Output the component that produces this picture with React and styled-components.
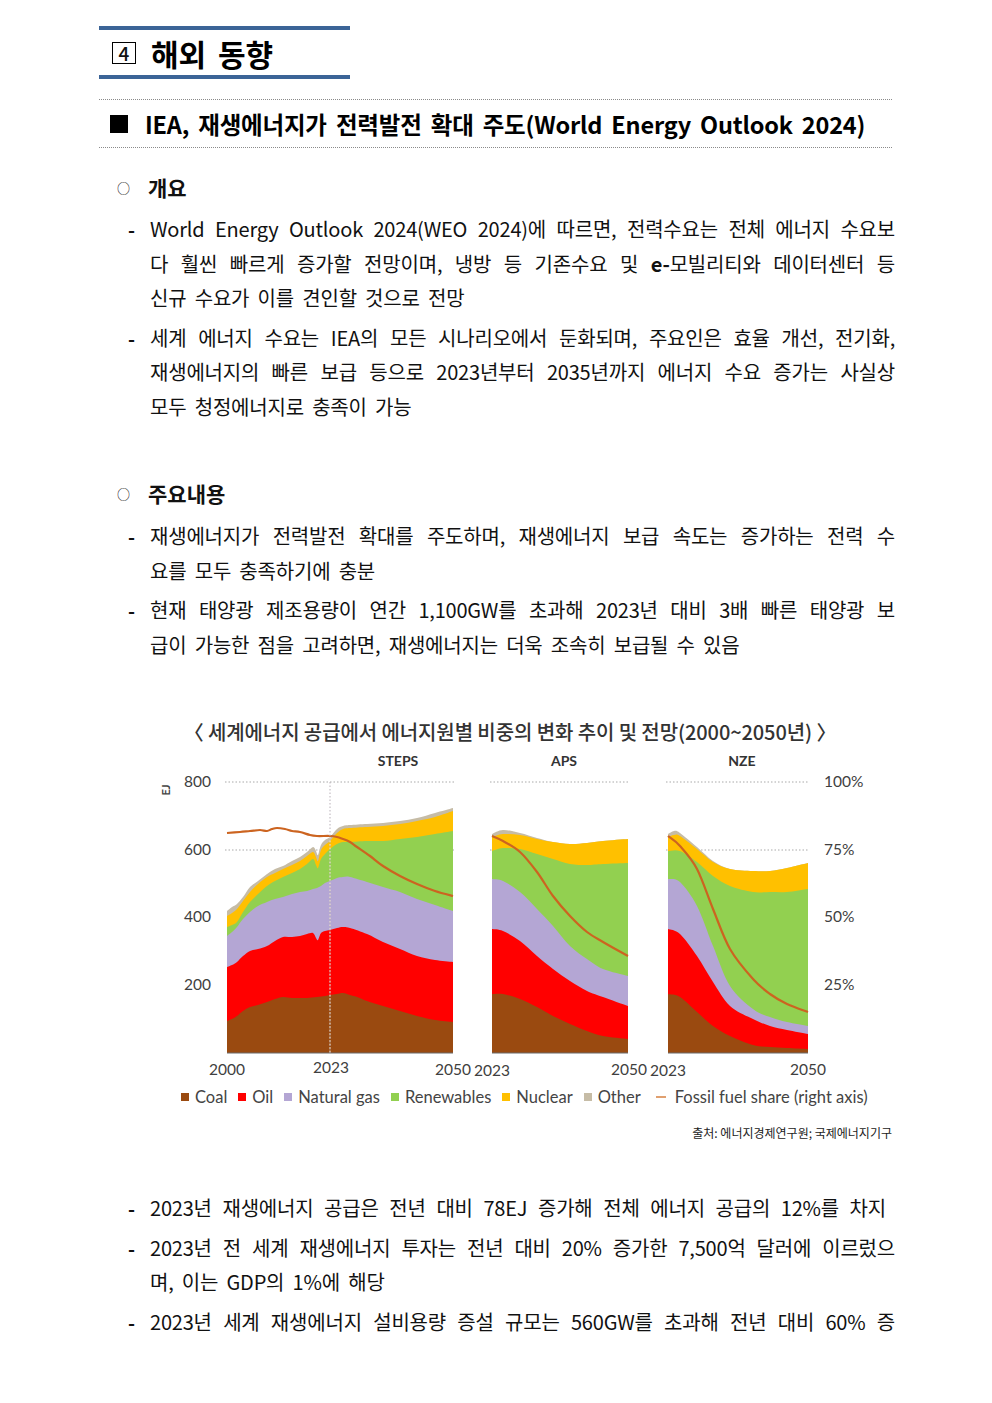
import styled, { createGlobalStyle } from "styled-components";

const BLUE = "#3b6497";
const BASE = 1054;

const colors = {
  coal: "#9a4a10",
  oil: "#ff0000",
  gas: "#b4a6d4",
  renew: "#92d050",
  nuclear: "#ffc000",
  other: "#c6bca6",
  fossil: "#cc6420",
};

// chart data, in page pixels (x, y)
const steps = {
  other: [[227,912],[232,908],[237,905],[243,898],[250,888],[258,882],[267,875],[275,870],[283,867],[292,862],[300,858],[307,853],[313,848],[316,852],[318,856],[321,846],[325,841],[330,838],[337,830],[343,827],[350,826],[367,825],[383,824],[400,822],[417,819],[435,814],[453,809]],
  nuclear: [[227,917],[232,914],[237,910],[243,902],[250,893],[258,885],[267,878],[275,874],[283,870],[292,866],[300,862],[307,857],[313,853],[316,858],[318,862],[321,851],[325,846],[330,842],[337,834],[343,830],[350,829],[367,828],[383,827],[400,825],[417,822],[435,818],[453,812]],
  renew: [[227,928],[232,926],[237,923],[243,913],[250,903],[258,895],[267,887],[275,882],[283,878],[292,874],[300,870],[307,865],[313,860],[316,866],[318,869],[321,860],[325,855],[330,850],[337,845],[343,843],[350,843],[367,842],[383,842],[400,840],[417,838],[435,835],[453,832]],
  gas: [[227,937],[232,933],[237,928],[243,920],[250,913],[258,907],[267,903],[275,900],[283,898],[292,895],[300,893],[307,892],[313,890],[317,889],[321,887],[325,884],[330,882],[337,879],[343,878],[350,878],[367,883],[383,888],[400,893],[417,900],[435,906],[453,912]],
  oil: [[227,968],[232,966],[237,963],[243,957],[250,952],[258,950],[267,947],[275,942],[283,938],[292,938],[300,937],[307,935],[313,934],[316,939],[318,941],[321,934],[325,932],[330,931],[337,929],[343,928],[350,929],[367,935],[383,943],[400,950],[417,957],[435,961],[453,963]],
  coal: [[227,1022],[232,1020],[237,1017],[243,1012],[250,1008],[258,1006],[267,1003],[275,1000],[283,998],[292,999],[300,999],[307,999],[317,998],[325,997],[330,996],[337,995],[343,994],[350,996],[357,998],[367,1002],[383,1007],[400,1012],[417,1017],[435,1021],[453,1023]],
  fossil: [[227,834],[240,833],[250,832],[260,831],[267,832],[272,830],[277,829],[285,830],[292,832],[300,833],[310,836],[317,837],[330,837],[337,838],[343,840],[350,843],[357,848],[370,857],[383,867],[400,877],[417,885],[435,892],[453,897]],
};

const aps = {
  other: [[492,835],[503,831],[520,834],[537,839],[553,843],[570,845],[587,844],[603,842],[628,840]],
  nuclear: [[492,838],[503,835],[520,836],[537,840],[553,843],[570,845],[587,844],[603,842],[628,840]],
  renew: [[492,852],[503,849],[520,850],[537,855],[553,860],[570,865],[587,866],[603,865],[628,864]],
  gas: [[492,880],[503,882],[520,893],[537,910],[553,927],[570,947],[587,960],[603,970],[628,977]],
  oil: [[492,930],[503,932],[520,942],[537,957],[553,970],[570,982],[587,992],[603,998],[628,1007]],
  coal: [[492,995],[503,995],[520,1000],[537,1008],[553,1017],[570,1025],[587,1032],[603,1037],[628,1040]],
  fossil: [[492,837],[503,842],[520,853],[537,873],[553,897],[570,917],[587,933],[603,943],[628,957]],
};

const nze = {
  other: [[668,835],[674,832],[680,834],[697,848],[713,862],[730,870],[753,872],[770,872],[787,869],[808,864]],
  nuclear: [[668,838],[674,836],[680,837],[697,850],[713,863],[730,870],[753,872],[770,872],[787,869],[808,864]],
  renew: [[668,852],[680,852],[697,863],[713,877],[730,887],[753,893],[770,893],[787,893],[808,890]],
  gas: [[668,880],[680,883],[697,907],[713,947],[730,987],[753,1010],[770,1018],[787,1023],[808,1027]],
  oil: [[668,930],[680,935],[697,957],[713,983],[730,1007],[753,1020],[770,1027],[787,1031],[808,1035]],
  coal: [[668,995],[680,998],[697,1013],[713,1027],[730,1037],[753,1046],[770,1048],[787,1049],[808,1050]],
  fossil: [[668,837],[680,847],[697,870],[713,910],[730,950],[753,980],[770,995],[787,1005],[808,1013]],
};

const layers = ["other", "nuclear", "renew", "gas", "oil", "coal"];

// catmull-rom through the points, as bezier segments
function curve(pts) {
  let d = "";
  for (let i = 0; i < pts.length - 1; i++) {
    const p0 = pts[i - 1] || pts[i];
    const p1 = pts[i];
    const p2 = pts[i + 1];
    const p3 = pts[i + 2] || p2;
    const c1 = [p1[0] + (p2[0] - p0[0]) / 6, p1[1] + (p2[1] - p0[1]) / 6];
    const c2 = [p2[0] - (p3[0] - p1[0]) / 6, p2[1] - (p3[1] - p1[1]) / 6];
    d += ` C${c1[0].toFixed(1)},${c1[1].toFixed(1)} ${c2[0].toFixed(1)},${c2[1].toFixed(1)} ${p2[0]},${p2[1]}`;
  }
  return d;
}

function area(pts) {
  const first = pts[0];
  const last = pts[pts.length - 1];
  return `M${first[0]},${BASE} L${first[0]},${first[1]}${curve(pts)} L${last[0]},${BASE} Z`;
}

function line(pts) {
  return `M${pts[0][0]},${pts[0][1]}${curve(pts)}`;
}

const GlobalStyle = createGlobalStyle`
  body {
    margin: 0;
    background: #fff;
    color: #111;
    font-family: "Noto Sans CJK KR", "Noto Sans", sans-serif;
  }
`;

const Page = styled.div`
  width: 992px;
  min-height: 1403px;
  box-sizing: border-box;
  padding: 26px 97px 0 99px;
`;

const ChapterHead = styled.div`
  width: 251px;
  height: 53px;
  box-sizing: border-box;
  border-top: 4px solid ${BLUE};
  border-bottom: 4px solid ${BLUE};
  display: flex;
  align-items: center;
  gap: 15px;
  padding-left: 13px;
`;

const NumBox = styled.span`
  width: 24px;
  height: 22px;
  box-sizing: border-box;
  border: 1.5px solid #000;
  display: flex;
  align-items: center;
  justify-content: center;
  font-size: 19px;
  font-weight: 500;
  line-height: 1;
`;

const ChapterTitle = styled.h1`
  margin: 0;
  font-size: 30px;
  font-weight: 700;
  line-height: 1;
  word-spacing: 5px;
  color: #000;
`;

const SectionHead = styled.h2`
  margin: 20px 3px 0 0;
  height: 49px;
  box-sizing: border-box;
  border-top: 1.5px dotted #8a8a8a;
  border-bottom: 1.5px dotted #8a8a8a;
  display: flex;
  align-items: center;
  gap: 17px;
  padding-left: 11px;
  font-size: 23.5px;
  font-weight: 700;
  letter-spacing: -0.2px;
  word-spacing: 4px;
  white-space: nowrap;
  color: #000;
`;

const Square = styled.span`
  width: 18px;
  height: 18px;
  background: #000;
  flex: none;
`;

const Topic = styled.div`
  display: flex;
  align-items: center;
  margin-top: ${(p) => p.$gap}px;
  padding-left: 18px;
  height: 34px;
  font-size: 21px;
  font-weight: 700;
`;

const Ring = styled.span`
  width: 31px;
  font-size: 13px;
  font-weight: 400;
`;

const Bullet = styled.div`
  display: flex;
  margin-top: ${(p) => p.$gap}px;
  padding-left: 29px;
`;

const Dash = styled.span`
  width: 22px;
  flex: none;
  font-size: 19px;
  font-weight: 700;
  line-height: 34.5px;
`;

const Lines = styled.div`
  width: 745px;
`;

const Line = styled.div`
  width: ${(p) => (p.$fill ? `${p.$fill}px` : "auto")};
  font-size: 20px;
  line-height: 34.5px;
  white-space: nowrap;
  letter-spacing: -0.2px;
  word-spacing: 4px;
  text-align: ${(p) => (p.$last ? "left" : "justify")};
  text-align-last: ${(p) => (p.$last ? "left" : "justify")};
`;

const Figure = styled.div`
  margin: 55px 0 0 51px;
  width: 720px;
`;

const FigTitle = styled.div`
  text-align: center;
  font-size: 20px;
  font-weight: 500;
  color: #333;
  line-height: 30px;
  letter-spacing: -0.1px;
`;

const Chart = styled.svg`
  display: block;
  width: 720px;
  height: 337px;
  font-family: Lato, "Open Sans", sans-serif;
`;

const Legend = styled.div`
  display: flex;
  align-items: center;
  gap: 11px;
  margin: 3px 0 0 31px;
  height: 20px;
  font-family: Lato, "Open Sans", sans-serif;
  font-size: 16.5px;
  color: #444;
`;

const Key = styled.span`
  display: flex;
  align-items: center;
  gap: 6px;
  &::before {
    content: "";
    width: ${(p) => (p.$line ? "10px" : "8px")};
    height: ${(p) => (p.$line ? "2px" : "8px")};
    background: ${(p) => p.$color};
    margin: ${(p) => (p.$line ? "0 3px 0 4px" : "0")};
  }
`;

const Source = styled.div`
  margin: 18px -22px 0 0;
  text-align: right;
  font-size: 12px;
  line-height: 16px;
  color: #222;
`;

function Item({ lines, gap }) {
  return (
    <Bullet $gap={gap}>
      <Dash>-</Dash>
      <Lines>
        {lines.map((l, i) => (
          <Line key={i} $fill={l.fill} $last={i === lines.length - 1 && !l.open && !l.fill}>
            {l.text}
          </Line>
        ))}
      </Lines>
    </Bullet>
  );
}

function Panel({ data }) {
  return (
    <g>
      {layers.map((k) => (
        <path key={k} d={area(data[k])} fill={colors[k]} />
      ))}
      <line x1={data.coal[0][0]} x2={data.coal[data.coal.length - 1][0]} y1={BASE} y2={BASE} stroke="#6b6b6b" strokeWidth="1.2" />
      <path d={line(data.fossil)} fill="none" stroke={colors.fossil} strokeWidth="2.2" />
    </g>
  );
}

function Grid({ x1, x2, ys }) {
  return ys.map((y) => (
    <line key={y} x1={x1} x2={x2} y1={y} y2={y} stroke="#a9a9a9" strokeWidth="1" strokeDasharray="1.5 2" />
  ));
}

function EnergyChart() {
  return (
    <Chart viewBox="150 748 720 337">
      <Grid x1={225} x2={455} ys={[783, 851]} />
      <Grid x1={490} x2={628} ys={[783, 851]} />
      <Grid x1={666} x2={808} ys={[783, 851]} />

      <Panel data={steps} />
      <Panel data={aps} />
      <Panel data={nze} />

      <line x1="330" x2="330" y1="783" y2="1054" stroke="#b8b0b8" strokeWidth="1" strokeDasharray="1.5 2" />
      <line x1="330" x2="330" y1="838" y2="1054" stroke="#f3e6d0" strokeWidth="1" strokeDasharray="1.5 2" />

      <g fontSize="14" fontWeight="700" fill="#333" textAnchor="middle">
        <text x="398" y="767">STEPS</text>
        <text x="564" y="767">APS</text>
        <text x="742" y="767">NZE</text>
      </g>

      <text x="170" y="791" fontSize="11" fontWeight="700" fill="#444" transform="rotate(-90 170 791)" textAnchor="middle">EJ</text>

      <g fontSize="15.5" fill="#404040" textAnchor="end">
        <text x="211" y="788">800</text>
        <text x="211" y="856">600</text>
        <text x="211" y="923">400</text>
        <text x="211" y="991">200</text>
      </g>
      <g fontSize="15.5" fill="#404040">
        <text x="824" y="788">100%</text>
        <text x="824" y="856">75%</text>
        <text x="824" y="923">50%</text>
        <text x="824" y="991">25%</text>
      </g>
      <g fontSize="15.5" fill="#404040" textAnchor="middle">
        <text x="227" y="1076">2000</text>
        <text x="331" y="1074">2023</text>
        <text x="453" y="1076">2050</text>
        <text x="492" y="1077">2023</text>
        <text x="629" y="1076">2050</text>
        <text x="668" y="1077">2023</text>
        <text x="808" y="1076">2050</text>
      </g>
    </Chart>
  );
}

export default function App() {
  return (
    <Page>
      <GlobalStyle />
      <ChapterHead>
        <NumBox>4</NumBox>
        <ChapterTitle>해외 동향</ChapterTitle>
      </ChapterHead>

      <SectionHead>
        <Square />
        IEA, 재생에너지가 전력발전 확대 주도(World Energy Outlook 2024)
      </SectionHead>

      <Topic $gap={22}>
        <Ring>○</Ring>개요
      </Topic>
      <Item
        gap={8}
        lines={[
          { text: "World Energy Outlook 2024(WEO 2024)에 따르면, 전력수요는 전체 에너지 수요보" },
          { text: <>다 훨씬 빠르게 증가할 전망이며, 냉방 등 기존수요 및 <b>e-</b>모빌리티와 데이터센터 등</> },
          { text: "신규 수요가 이를 견인할 것으로 전망" },
        ]}
      />
      <Item
        gap={5}
        lines={[
          { text: "세계 에너지 수요는 IEA의 모든 시나리오에서 둔화되며, 주요인은 효율 개선, 전기화," },
          { text: "재생에너지의 빠른 보급 등으로 2023년부터 2035년까지 에너지 수요 증가는 사실상" },
          { text: "모두 청정에너지로 충족이 가능" },
        ]}
      />

      <Topic $gap={52}>
        <Ring>○</Ring>주요내용
      </Topic>
      <Item
        gap={9}
        lines={[
          { text: "재생에너지가 전력발전 확대를 주도하며, 재생에너지 보급 속도는 증가하는 전력 수" },
          { text: "요를 모두 충족하기에 충분" },
        ]}
      />
      <Item
        gap={5}
        lines={[
          { text: "현재 태양광 제조용량이 연간 1,100GW를 초과해 2023년 대비 3배 빠른 태양광 보" },
          { text: "급이 가능한 점을 고려하면, 재생에너지는 더욱 조속히 보급될 수 있음" },
        ]}
      />

      <Figure>
        <FigTitle>〈 세계에너지 공급에서 에너지원별 비중의 변화 추이 및 전망(2000~2050년) 〉</FigTitle>
        <EnergyChart />
        <Legend>
          <Key $color={colors.coal}>Coal</Key>
          <Key $color={colors.oil}>Oil</Key>
          <Key $color={colors.gas}>Natural gas</Key>
          <Key $color={colors.renew}>Renewables</Key>
          <Key $color={colors.nuclear}>Nuclear</Key>
          <Key $color={colors.other}>Other</Key>
          <Key $color="#e0a070" $line>Fossil fuel share (right axis)</Key>
        </Legend>
        <Source>출처: 에너지경제연구원; 국제에너지기구</Source>
      </Figure>

      <Item
        gap={50}
        lines={[{ text: "2023년 재생에너지 공급은 전년 대비 78EJ 증가해 전체 에너지 공급의 12%를 차지", fill: 736 }]}
      />
      <Item
        gap={5}
        lines={[
          { text: "2023년 전 세계 재생에너지 투자는 전년 대비 20% 증가한 7,500억 달러에 이르렀으" },
          { text: "며, 이는 GDP의 1%에 해당" },
        ]}
      />
      <Item
        gap={5}
        lines={[{ text: "2023년 세계 재생에너지 설비용량 증설 규모는 560GW를 초과해 전년 대비 60% 증", open: true }]}
      />
    </Page>
  );
}
